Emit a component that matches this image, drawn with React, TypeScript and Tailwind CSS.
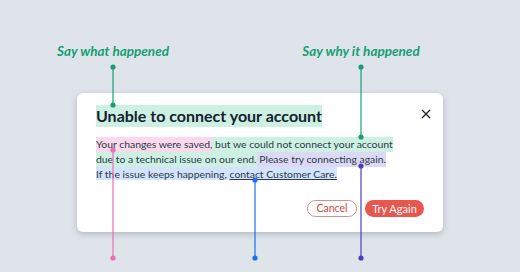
import React from 'react';

const font = { fontFamily: 'Lato, "Noto Sans", sans-serif' };

const Dot = ({ x, y, color }: { x: number; y: number; color: string }) => (
  <circle cx={x} cy={y} r={2.6} fill={color} />
);

// connector lines from the labels to the highlighted text
const Annotations: React.FC = () => (
  <svg className="absolute inset-0 pointer-events-none" width={520} height={272}>
    <line x1={113} y1={67} x2={113} y2={105} stroke="#16a074" strokeWidth={1.2} />
    <Dot x={113} y={67} color="#16a074" />
    <Dot x={113} y={105} color="#16a074" />
    <line x1={361} y1={67} x2={361} y2={137} stroke="#16a074" strokeWidth={1.2} />
    <Dot x={361} y={67} color="#16a074" />
    <Dot x={361} y={137} color="#16a074" />

    <line x1={113} y1={150} x2={113} y2={258} stroke="#ec6fb5" strokeWidth={1.2} />
    <Dot x={113} y={150} color="#ec6fb5" />
    <Dot x={113} y={258} color="#ec6fb5" />
    <line x1={255} y1={180} x2={255} y2={258} stroke="#1d6ef0" strokeWidth={1.2} />
    <Dot x={255} y={180} color="#1d6ef0" />
    <Dot x={255} y={258} color="#1d6ef0" />
    <line x1={361} y1={166} x2={361} y2={258} stroke="#4a3fbf" strokeWidth={1.2} />
    <Dot x={361} y={166} color="#4a3fbf" />
    <Dot x={361} y={258} color="#4a3fbf" />
  </svg>
);

export default function App() {
  return (
    <div className="relative w-[520px] h-[272px] overflow-hidden bg-[#dfe4ea]" style={font}>
      {/* top labels */}
      <div className="flex pt-[41px] h-[93px] text-[13.5px] font-bold italic text-[#159f72]">
        <div className="w-[226px] text-center">Say what happened</div>
        <div className="w-[270px] text-center">Say why it happened</div>
      </div>

      {/* dialog */}
      <div className="ml-[77px] w-[366px] h-[139px] bg-white rounded-[6px] shadow-[0_2px_6px_rgba(40,50,70,0.25)] pl-[19px] pr-[12px] pt-[12px]">
        <div className="flex items-start justify-between">
          <div className="h-[22px] bg-[#cdf0e2] text-[16px] leading-[22px] font-bold text-[#14222e] whitespace-nowrap">
            Unable to connect your account
          </div>
          <svg width={10} height={10} viewBox="0 0 10 10" className="mt-[4px]">
            <path d="M1 1L9 9M9 1L1 9" stroke="#1a1f2b" strokeWidth={1.3} />
          </svg>
        </div>

        <div className="mt-[10px] text-[10.4px] leading-[15px] text-[#2a3a4a] whitespace-nowrap">
          <div className="flex">
            <span className="bg-[#fbd9ea]">Your changes were saved,</span>
            <span className="bg-[#cdf0e2] whitespace-pre"> but we could not connect your account</span>
          </div>
          <div className="flex">
            <span className="bg-[#cdf0e2]">due to a technical issue on our end.</span>
            <span className="bg-[#ddd9f5] whitespace-pre"> Please try connecting again.</span>
          </div>
          <div className="flex h-[13px]">
            <span className="bg-[#d3e3fb] whitespace-pre">
              If the issue keeps happening, <span className="underline">contact Customer Care.</span>
            </span>
          </div>
        </div>

        <div className="flex justify-end gap-[8px] mt-[20px] pr-[7px]">
          <button className="h-[17px] w-[50px] rounded-full border border-[#d98f8a] text-[10.5px] leading-[15px] text-[#c94a44]">
            Cancel
          </button>
          <button className="h-[17px] w-[59px] rounded-full bg-[#e8564e] text-[11px] leading-[17px] text-white">
            Try Again
          </button>
        </div>
      </div>

      {/* bottom labels, cut off by the frame */}
      <div className="flex pt-[36px] text-[13px] font-bold italic">
        <div className="w-[56px]" />
        <div className="w-[144px] text-[#ec4fa0]">Don't blame</div>
        <div className="w-[140px] text-[#1d5fe0]">Give a way out</div>
        <div className="text-[#3f34b0]">Help them fix it</div>
      </div>

      <Annotations />
    </div>
  );
}
